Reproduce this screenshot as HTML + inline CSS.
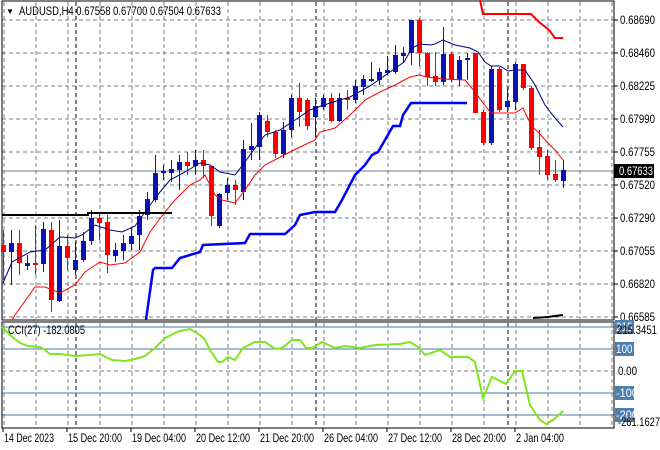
<!DOCTYPE html>
<html><head><meta charset="utf-8"><style>
html,body{margin:0;padding:0;background:#fff;width:660px;height:450px;overflow:hidden}
svg{display:block}
text{font-family:"Liberation Sans",sans-serif;font-size:12px;fill:#000}
</style></head><body>
<svg id="s" width="660" height="450" xmlns="http://www.w3.org/2000/svg">
<rect width="660" height="450" fill="#fff"/>
<g id="grid"></g>
<g id="cndl"></g>
<g id="lines"></g>
<g id="lbl"></g>
</svg>
<script>
const NS="http://www.w3.org/2000/svg";
function el(p,t,a,txt){const e=document.createElementNS(NS,t);for(const k in a)e.setAttribute(k,a[k]);if(txt!==undefined)e.textContent=txt;document.getElementById(p).appendChild(e);return e;}
for(let x=4;x<=612;x+=32){el('grid','line',{x1:x,y1:2,x2:x,y2:319,stroke:'#77808a','stroke-dasharray':'4,3'});el('grid','line',{x1:x,y1:323,x2:x,y2:427,stroke:'#77808a','stroke-dasharray':'4,3'});}
[76,316,508].forEach(x=>{el('grid','line',{x1:x,y1:2,x2:x,y2:319,stroke:'#000','stroke-dasharray':'4,3'});el('grid','line',{x1:x,y1:323,x2:x,y2:427,stroke:'#000','stroke-dasharray':'4,3'});});
for(let y=20;y<=317;y+=33)el('grid','line',{x1:2,y1:y,x2:614,y2:y,stroke:'#77808a','stroke-dasharray':'4,3'});
el('grid','line',{x1:2,y1:171,x2:614,y2:171,stroke:'#77808a'});
[327,349,393,415].forEach(y=>el('grid','line',{x1:2,y1:y,x2:614,y2:y,stroke:'#4a78a8'}));
el('grid','line',{x1:2,y1:371,x2:614,y2:371,stroke:'#77808a','stroke-dasharray':'4,3'});
el('grid','rect',{x:2,y:1,width:612,height:319,fill:'none',stroke:'#000'});
el('grid','rect',{x:2,y:322,width:612,height:106,fill:'none',stroke:'#000'});
const C=[['r',245,252,230,280],['b',243,252,230,285],['r',243,263,230,275],['b',263,266,255,270],['r',263,265,225,275],['b',229,264,222,272],['r',230,300,222,312],['b',246,301,220,302],['r',246,258,235,270],['b',260,270,242,275],['b',241,260,232,262],['b',218,241,210,245],['r',218,223,212,240],['r',222,255,215,273],['b',250,256,243,262],['b',243,251,235,260],['b',236,244,228,250],['b',216,235,210,250],['b',199,215,192,220],['b',173,200,155,202],['b',171,173,165,180],['b',169,173,160,182],['b',162,170,155,190],['r',162,166,152,175],['b',160,166,150,175],['r',160,166,150,178],['r',166,216,166,226],['b',194,226,193,228],['b',185,193,178,200],['r',185,190,180,205],['b',149,192,140,200],['b',146,150,123,160],['b',115,147,112,160],['r',121,132,115,137],['r',132,154,130,158],['b',130,154,122,158],['b',98,130,95,137],['r',98,112,83,127],['r',100,126,98,130],['b',106,117,98,137],['b',98,107,95,110],['r',98,121,93,122],['b',98,121,93,122],['r',98,100,90,110],['b',86,100,80,103],['b',79,87,75,95],['b',79,81,62,82],['b',72,80,68,85],['b',70,73,56,75],['b',55,72,45,74],['b',53,56,47,63],['b',20,53,20,65],['r',20,53,18,66],['r',53,77,52,86],['r',76,82,52,86],['b',54,82,27,85],['r',54,79,52,82],['b',60,80,56,86],['b',58,60,53,80],['r',53,113,53,113],['r',112,143,110,145],['b',69,143,66,145],['r',69,110,67,112],['b',101,107,87,112],['b',64,102,62,110],['r',64,88,64,90],['r',88,148,86,150],['r',147,157,130,175],['r',156,175,150,180],['r',174,180,160,182],['b',170,181,160,188]];
C.forEach((c,k)=>{const x=3+8*k;const col=c[0]=='r'?'#ff0000':'#0a14b4';
el('cndl','line',{x1:x+0.5,y1:c[3],x2:x+0.5,y2:c[4],stroke:col});
el('cndl','rect',{x:x-2,y:c[1],width:5,height:Math.max(1,c[2]-c[1]),fill:col});});
function pl(pts,col,w){el('lines','polyline',{points:pts.map(p=>p.join(',')).join(' '),fill:'none',stroke:col,'stroke-width':w});}
pl([[3,283],[12,262],[30,252],[45,250],[60,237],[75,238],[82,235],[95,225],[110,230],[122,232],[135,226],[150,205],[160,192],[170,180],[185,172],[200,163],[210,165],[220,172],[235,175],[245,162],[255,148],[265,135],[280,130],[295,120],[310,110],[330,103],[350,97],[370,86],[390,72],[404,62],[412,48],[420,44],[430,45],[435,44],[443,40],[455,45],[470,48],[478,52],[485,62],[491,66],[500,66],[508,71],[515,70],[525,70],[535,85],[545,105],[555,118],[563,127]],'#000080',1);
pl([[12,320],[15,315],[35,287],[45,287],[60,293],[75,285],[85,272],[100,262],[110,265],[125,263],[140,252],[150,232],[165,212],[175,200],[190,185],[200,180],[205,175],[215,195],[222,200],[235,203],[245,190],[255,175],[265,165],[290,152],[300,147],[315,140],[320,132],[335,128],[350,115],[365,100],[380,92],[395,85],[410,77],[419,75],[427,77],[443,79],[465,80],[475,92],[483,103],[491,113],[499,113],[515,113],[523,108],[531,125],[539,133],[547,142],[555,150],[563,160]],'#ff0000',1);
pl([[480,0],[483,14],[531,14],[539,22],[549,30],[555,38],[563,38]],'#ff0000',2);
pl([[146,320],[153,270],[155,268],[172,268],[180,258],[200,252],[203,245],[245,243],[250,234],[285,234],[295,225],[300,215],[315,212],[335,212],[342,200],[355,175],[365,165],[372,155],[378,152],[385,140],[393,126],[400,126],[403,115],[411,103],[467,103]],'#0000ff',2.5);
pl([[2,215],[88,215],[88,213],[172,213]],'#000',2);
pl([[533,318],[548,317],[555,316],[563,315]],'#000',2);
pl([[2,327],[10,335],[20,343],[28,346],[40,347],[45,350],[50,354],[60,354],[75,356],[90,355],[100,354],[112,360],[125,361],[135,359],[145,356],[155,348],[165,338],[175,333],[180,331],[190,329],[200,335],[205,340],[210,350],[218,362],[222,362],[228,357],[235,360],[243,348],[255,342],[265,342],[275,349],[282,348],[292,340],[300,340],[306,348],[312,348],[322,342],[335,348],[345,346],[360,348],[375,345],[400,344],[410,342],[418,347],[425,355],[440,350],[450,357],[468,357],[475,362],[483,398],[492,377],[506,384],[515,371],[522,371],[530,405],[540,420],[546,424],[553,420],[563,411]],'#7fe61e',2);
function T(x,y,t,len,st){const a={x:x,y:y,textLength:len,lengthAdjust:'spacingAndGlyphs'};if(st)a.style=st;return el('lbl','text',a,t);}
T(6,14,'▼',8,'font-size:8px');
T(19,15,'AUDUSD,H4  0.67558 0.67700 0.67504 0.67633',202);
T(8,334,'CCI(27) -182.0805',77);
const P=['0.68690','0.68460','0.68225','0.67990','0.67755','0.67520','0.67290','0.67055','0.66820','0.66585'];
P.forEach((t,i)=>{const y=20+33*i;el('lbl','line',{x1:614,y1:y,x2:618,y2:y,stroke:'#000'});T(620,y+4,t,35);});
el('lbl','rect',{x:614,y:164,width:40,height:14,fill:'#000'});
T(619,175,'0.67633',34,'fill:#fff');
[[327,'215'],[349,'100'],[393,'-100'],[415,'-200']].forEach(a=>{el('lbl','rect',{x:615,y:a[0]-7,width:19,height:14,fill:'#4a7fb0'});T(616,a[0]+4,a[1],a[1].length*5.5,'fill:#fff');});
T(617,334,'215.3451',40);
T(618,375,'0.00',19);
T(618,426,'-261.1627',42);
const D=['14 Dec 2023','15 Dec 20:00','19 Dec 04:00','20 Dec 12:00','21 Dec 20:00','26 Dec 04:00','27 Dec 12:00','28 Dec 20:00','2 Jan 04:00'];
D.forEach((t,i)=>{const x=3+64*i;el('lbl','line',{x1:x,y1:428,x2:x,y2:432,stroke:'#000'});T(x+1,442,t,i==8?48:(i==0?50:54));});
</script>
</body></html>
